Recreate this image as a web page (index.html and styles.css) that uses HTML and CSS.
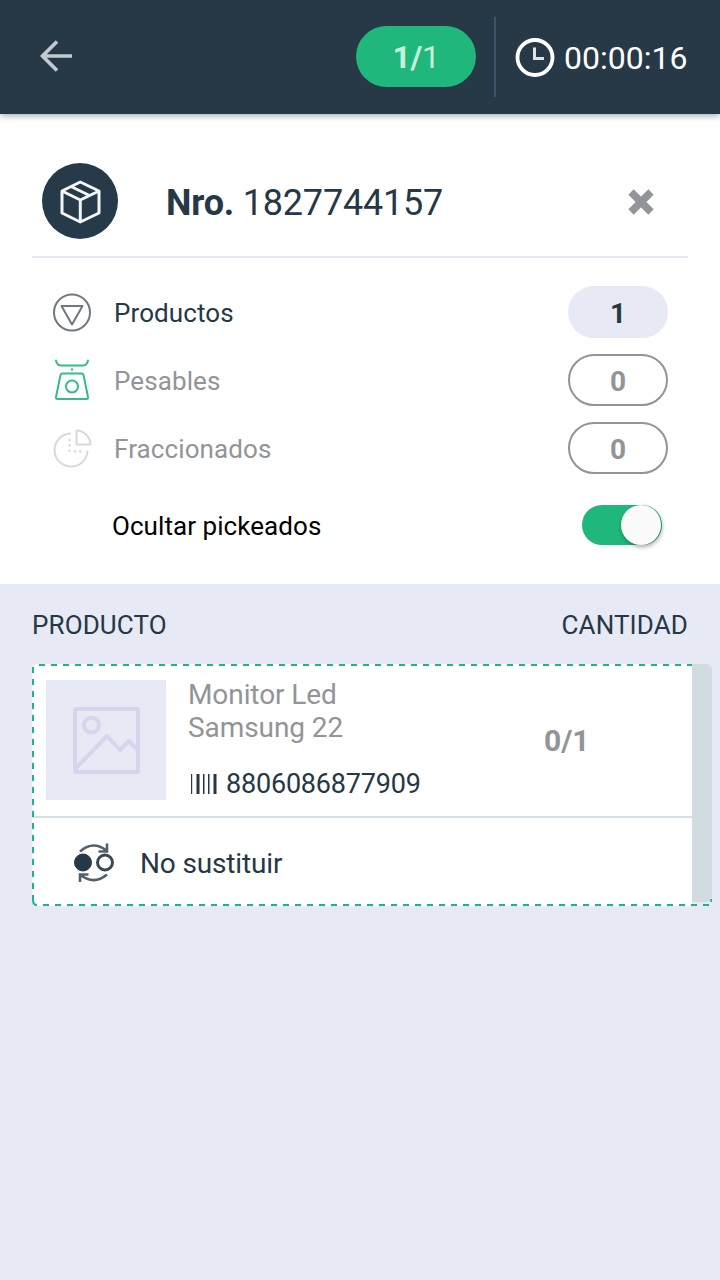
FILE: index.html
```html
<!DOCTYPE html>
<html lang="es">
<head>
<meta charset="utf-8">
<title>Pedido 1827744157</title>
<link rel="stylesheet" href="styles.css">
</head>
<body>
<header class="topbar">
  <svg class="back" width="36" height="36" viewBox="0 0 36 36"><path d="M34 18H5M19 3.500L4.500 18L19 32.500"/></svg>
  <div class="progress"><b>1/</b>1</div>
  <div class="timer">
    <svg class="clock" width="40" height="40" viewBox="0 0 40 40"><circle cx="20" cy="20.500" r="17.500"/><path d="M19.500 10.500V21.500H29"/></svg>
    <span class="time">00:00:16</span>
  </div>
</header>
<main>
  <section class="order">
    <div class="order-head">
      <svg class="package" width="76" height="76" viewBox="0 0 76 76"><circle cx="38" cy="38" r="38"/><path d="M38.300 19L57 28V50L38.300 59L20 50V28ZM20 28L38.300 37L57 28M38.300 37V59M29 23.500L47.500 32.500"/></svg>
      <h1 class="number"><b>Nro.</b> 1827744157</h1>
      <svg class="close" width="28" height="28" viewBox="0 0 28 28"><path d="M4 4L24 24M24 4L4 24"/></svg>
    </div>
    <div class="counts">
      <div class="count active">
        <svg class="icon slate" width="44" height="44" viewBox="0 0 44 44"><circle cx="22" cy="22.500" r="18"/><path d="M11.500 16H32.500L22 34.500Z"/></svg>
        <span class="label">Productos</span><b class="pill">1</b>
      </div>
      <div class="count">
        <svg class="icon green" width="44" height="44" viewBox="0 0 44 44"><path d="M6 2.500Q7 7.500 11 7.500H33Q37 7.500 38 2.500M12.500 15.500H31.500Q33 15.500 33.500 17L38 39Q38.500 41 36.500 41H7.500Q5.500 41 6 39L10.500 17Q11 15.500 12.500 15.500Z"/><path d="M22 11.300V11.800"/><circle cx="22" cy="28.500" r="6"/></svg>
        <span class="label">Pesables</span><b class="pill">0</b>
      </div>
      <div class="count">
        <svg class="icon pale" width="44" height="44" viewBox="0 0 44 44"><path d="M20 7.500A16.500 16.500 0 1 0 37.500 25.500M26.500 4.500V18.500H40.500A14.500 14.500 0 0 0 26.500 4.500Z"/><path class="dots" d="M19.500 14V25M25 25.500H34"/></svg>
        <span class="label">Fraccionados</span><b class="pill">0</b>
      </div>
    </div>
    <div class="hide-row"><span class="hide-label">Ocultar pickeados</span><div class="switch"><i class="knob"></i></div></div>
  </section>
  <section class="products">
    <div class="columns"><span>PRODUCTO</span><span>CANTIDAD</span></div>
    <article class="card">
      <div class="body">
        <div class="item">
          <svg class="thumb" width="120" height="120" viewBox="0 0 120 120"><rect x="29" y="29" width="63" height="63" rx="1"/><circle cx="45.500" cy="45" r="7.500"/><path d="M29 89L61 56L74 70L83 61L92 70"/></svg>
          <div class="info">
            <div class="name">Monitor Led<br>Samsung 22</div>
            <div class="code"><svg class="bars" width="28" height="20" viewBox="0 0 28 20"><path d="M1 0h1.200v20H1zM6.500 0h3v20h-3zM13 0h1.500v20H13zM18 0h1.500v20H18zM23.500 0h3v20h-3z"/></svg><span class="ean">8806086877909</span></div>
          </div>
          <b class="qty">0/1</b>
        </div>
        <div class="swap">
          <svg class="swap-icon" width="42" height="42" viewBox="0 0 42 42"><circle class="full" cx="10" cy="20.500" r="8.500"/><circle cx="32" cy="20.500" r="7.500"/><path d="M7 9.500Q20 -2 33.500 8.500M34 1.500V9.500H25.500M34 32.500Q21 43.500 7.500 33M7 40V32.500H15.500"/></svg>
          <span class="swap-text">No sustituir</span>
        </div>
      </div>
      <div class="handle"></div>
      <svg class="outline" width="680" height="242" viewBox="0 0 680 242"><path d="M7 1H660"/><path d="M1 3V236"/><path d="M1 236Q1 241 5 241" class="corner"/><path d="M11 241H677"/><path d="M679.300 235V238" class="corner"/></svg>
    </article>
  </section>
</main>
</body>
</html>
```
FILE: styles.css
```css
* { box-sizing: border-box; }
body { margin: 0; width: 720px; height: 1280px; overflow: hidden; background: #e7eaf5; color: #263746; font-family: Roboto, sans-serif; }
svg { display: block; flex: none; fill: none; }
main { display: flex; flex-direction: column; }

.topbar { position: relative; z-index: 1; display: flex; align-items: center; height: 114px; padding: 0 32px 0 38px; background: #273847; box-shadow: 0 2px 6px rgba(39, 56, 71, .4); }
.back { margin-top: -2px; stroke: #c2cad2; stroke-width: 3.6; }
.progress { width: 120px; height: 61px; margin: -1px 18px 0 282px; border-radius: 31px; background: #1fb77b; color: #c8f0df; font-size: 32px; line-height: 63px; letter-spacing: -.4px; text-align: center; }
.timer { display: flex; align-items: center; height: 80px; padding-left: 19px; border-left: 2px solid #3b566b; }
.clock { stroke: #fff; stroke-width: 3.8; }
.clock path { stroke-width: 3; stroke: #dfe3e6; }
.time { margin-left: 9px; padding-top: 2px; color: #fff; font-size: 32px; line-height: 38px; white-space: nowrap; }

.order { height: 470px; padding: 40px 32px 0; background: #fff; }
.order-head { display: flex; align-items: center; height: 104px; padding: 0 33px 7px 10px; border-bottom: 2px solid #e7e9f5; }
.package { margin-top: -1px; }
.package circle { fill: #273a4a; }
.package path { stroke: #f4f5f6; stroke-width: 3; stroke-linejoin: round; }
.number { flex: 1; margin: 3px 0 0 48px; font-size: 36px; font-weight: 400; line-height: 42px; letter-spacing: -.2px; }
.close { margin-top: 1px; stroke: #929497; stroke-width: 7.5; }

.counts { display: flex; flex-direction: column; gap: 16px; padding: 28px 20px 0 18px; }
.count { display: flex; align-items: center; height: 52px; color: #929497; font-size: 26px; }
.active { color: #263746; }
.label { flex: 1; margin: 1px 0 0 20px; letter-spacing: .1px; }
.icon { stroke-width: 2; stroke-linejoin: round; stroke-linecap: round; }
.slate { stroke: #707980; }
.green { stroke: #35bd86; }
.pale { stroke: #d8d9da; }
.dots { stroke-width: 2.400; stroke-dasharray: .1 5.200; }
.pill { width: 100px; height: 52px; border: 2px solid #929497; border-radius: 26px; line-height: 51px; text-align: center; font-size: 28px; }
.active .pill { border-color: #e7eaf5; background: #e7eaf5; }
.hide-row { display: flex; justify-content: space-between; align-items: center; height: 40px; margin-top: 31px; padding: 0 26px 0 80px; color: #000; font-size: 26px; }
.hide-label { padding-top: 2px; letter-spacing: .06px; }
.switch { display: flex; justify-content: flex-end; width: 80px; height: 40px; border-radius: 20px; background: #1fb77b; }
.knob { width: 40px; height: 40px; margin-right: 1px; border-radius: 50%; background: #fafafa; box-shadow: 1px 2px 4px rgba(0, 0, 0, .35); }

.products { padding: 25px 8px 0 32px; }
.columns { display: flex; justify-content: space-between; height: 55px; padding-right: 24px; font-size: 26px; line-height: 32px; letter-spacing: .12px; }
.card { position: relative; display: flex; height: 242px; }
.body { width: 660px; background: #fff; border-radius: 5px 0 0 5px; }
.item { display: flex; height: 154px; padding: 16px 0 0 14px; border-bottom: 2px solid #d4e0e7; }
.thumb { background: #e7e9f5; stroke: #d5d6ee; stroke-width: 4; stroke-linejoin: round; }
.info { width: 356px; margin-left: 22px; }
.name { margin-top: -2px; color: #929497; font-size: 28px; line-height: 33px; letter-spacing: -.08px; }
.code { display: flex; align-items: center; margin-top: 23px; font-size: 27px; line-height: 32px; letter-spacing: -.2px; }
.bars { margin-left: 2px; fill: #263746; }
.ean { margin-left: 8px; padding-top: 1px; }
.qty { margin-top: 43px; color: #929497; font-size: 30px; line-height: 36px; }
.swap { display: flex; align-items: center; height: 88px; padding: 2px 0 0 41px; font-size: 28px; }
.swap-icon { stroke: #52606b; stroke-width: 2.600; }
.swap-icon circle { stroke-width: 3; stroke: #3a4956; }
.swap-icon .full { fill: #273847; stroke: #273847; stroke-width: 1; }
.swap-text { margin-left: 25px; letter-spacing: -.15px; }
.handle { width: 20px; height: 238px; border-radius: 0 6px 6px 0; background: #d2dbe0; }
.outline { position: absolute; inset: 0; stroke: #1bb393; stroke-width: 2; stroke-dasharray: 6 6; }
.outline .corner { stroke-dasharray: none; }
```
